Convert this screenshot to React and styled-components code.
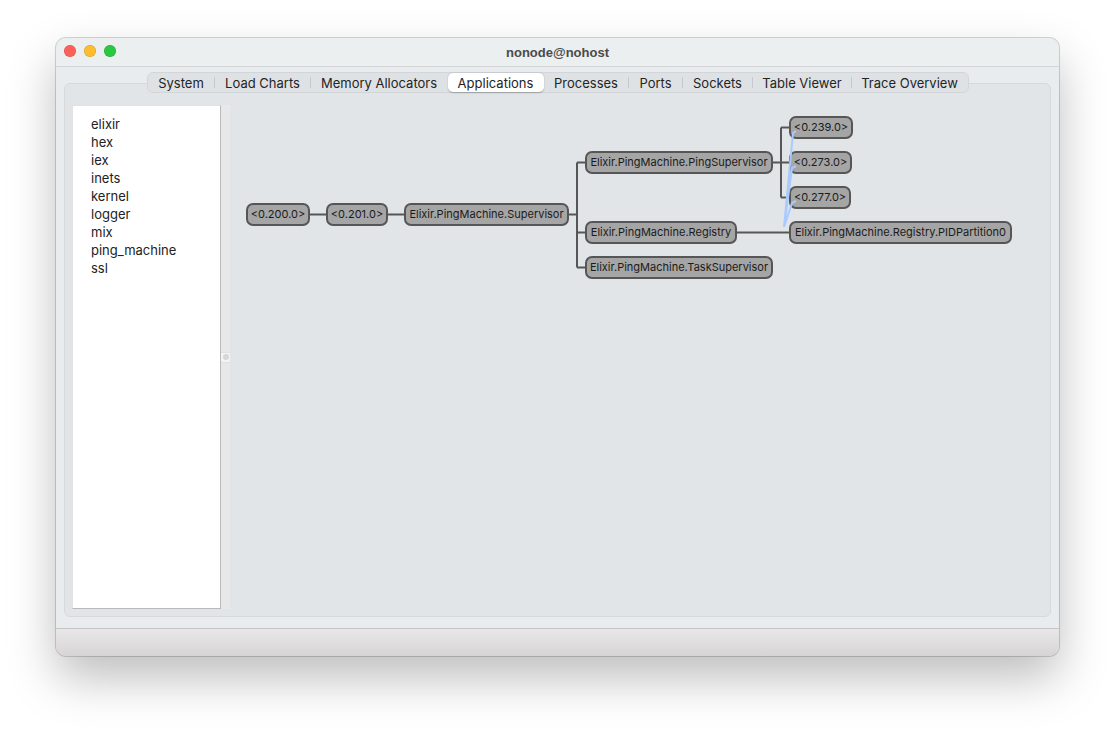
import React from 'react';
import styled, { createGlobalStyle } from 'styled-components';

const GlobalStyle = createGlobalStyle`
  html, body {
    margin: 0;
    background: #fff;
    overflow: hidden;
  }
  body {
    font-family: Inter, "Liberation Sans", sans-serif;
    -webkit-font-smoothing: antialiased;
  }
`;

const Desktop = styled.div`
  padding: 38px 0 0 56px;
  height: 730px;
  box-sizing: border-box;
`;

const Window = styled.div`
  width: 1003px;
  height: 618px;
  display: flex;
  flex-direction: column;
  border-radius: 10px;
  overflow: hidden;
  background: #e9ecee;
  box-shadow: 0 0 0 1px rgba(0, 0, 0, 0.16), 0 22px 48px rgba(0, 0, 0, 0.26);
`;

const TitleBar = styled.div`
  flex: none;
  height: 28px;
  display: grid;
  grid-template-columns: 1fr auto 1fr;
  align-items: center;
  background: #eceff0;
  border-bottom: 1px solid #d3d5d6;
`;

const Lights = styled.div`
  display: flex;
  gap: 8px;
  padding-left: 8px;
  margin-bottom: 2px;
`;

const Light = styled.span`
  width: 12px;
  height: 12px;
  border-radius: 50%;
  background: ${props => props.color};
  box-shadow: inset 0 0 0 0.5px rgba(0, 0, 0, 0.18);
`;

const Title = styled.div`
  font-family: "Liberation Sans", Arial, sans-serif;
  font-weight: bold;
  font-size: 13px;
  color: #4b4b4b;
`;

const Body = styled.div`
  flex: 1;
  display: flex;
  flex-direction: column;
  padding-top: 5px;
  min-height: 0;
`;

const TabBar = styled.div`
  align-self: center;
  display: flex;
  height: 21px;
  box-sizing: border-box;
  background: #dfe2e4;
  border: 1px solid #d3d6d8;
  border-radius: 6px;
  position: relative;
  z-index: 1;
  margin-bottom: -10px;
`;

const Tab = styled.div`
  position: relative;
  width: ${props => props.$w}px;
  display: flex;
  align-items: center;
  justify-content: center;
  font-size: 13px;
  color: #242424;
  border-radius: 5px;
  background: ${props => (props.$active ? '#fff' : 'transparent')};
  box-shadow: ${props => (props.$active ? '0 0.5px 1.5px rgba(0,0,0,0.28)' : 'none')};

  &::before {
    content: '';
    display: ${props => (props.$sep ? 'block' : 'none')};
    position: absolute;
    left: -1px;
    top: 4px;
    bottom: 4px;
    width: 1px;
    background: #c7cacc;
  }
`;

const Pane = styled.div`
  flex: 1;
  display: flex;
  min-height: 0;
  margin: 0 8px 11px;
  padding: 21px 7px 7px;
  background: #e2e5e7;
  border: 1px solid #d6d9db;
  border-radius: 6px;
`;

const AppList = styled.ul`
  width: 149px;
  margin: 0;
  padding: 9px 0 0 18px;
  list-style: none;
  box-sizing: border-box;
  background: #fff;
  border: 1px solid #e2e2e2;
  border-right-color: #b9b9b9;
  border-bottom-color: #b9b9b9;
`;

const AppItem = styled.li`
  font-size: 13px;
  line-height: 18px;
  color: #222;
`;

const Splitter = styled.div`
  width: 9px;
  display: flex;
  align-items: center;
  background: #e8e8e8;
`;

const Handle = styled.div`
  width: 100%;
  height: 9px;
  display: flex;
  align-items: center;
  justify-content: center;
  background: #f3f3f3;
  border-top: 1px solid #e0e0e0;
  border-bottom: 1px solid #e0e0e0;

  &::after {
    content: '';
    width: 6px;
    height: 6px;
    border-radius: 50%;
    background: #d6d6d6;
  }
`;

const Canvas = styled.div`
  flex: 1;
  position: relative;
`;

const Layer = styled.svg`
  position: absolute;
  left: 0;
  top: 0;
  width: 100%;
  height: 100%;
  pointer-events: none;
`;

const Node = styled.div`
  position: absolute;
  left: ${props => props.$x}px;
  top: ${props => props.$y}px;
  width: ${props => props.$w}px;
  height: 23px;
  box-sizing: border-box;
  border: 2px solid #565656;
  border-radius: 7px;
  background: #a5a5a5;
  font-size: 11px;
  line-height: 19px;
  text-align: center;
  color: #1b1b1b;
  white-space: nowrap;
`;

const StatusBar = styled.div`
  flex: none;
  height: 27px;
  border-top: 1px solid #c3c3c3;
  background: linear-gradient(#e9e7e7, #d6d4d4);
`;

const tabs = [
  ['System', 67],
  ['Load Charts', 96],
  ['Memory Allocators', 137],
  ['Applications', 96],
  ['Processes', 85],
  ['Ports', 54],
  ['Sockets', 70],
  ['Table Viewer', 99],
  ['Trace Overview', 116],
];
const activeTab = 3;

const apps = ['elixir', 'hex', 'iex', 'inets', 'kernel', 'logger', 'mix', 'ping_machine', 'ssl'];

const nodes = [
  { label: '<0.200.0>', x: 16, y: 98, w: 64 },
  { label: '<0.201.0>', x: 96, y: 98, w: 62 },
  { label: 'Elixir.PingMachine.Supervisor', x: 174, y: 98, w: 165 },
  { label: 'Elixir.PingMachine.PingSupervisor', x: 355, y: 46, w: 188 },
  { label: 'Elixir.PingMachine.Registry', x: 355, y: 116, w: 152 },
  { label: 'Elixir.PingMachine.TaskSupervisor', x: 355, y: 151, w: 188 },
  { label: '<0.239.0>', x: 559, y: 11, w: 64 },
  { label: '<0.273.0>', x: 559, y: 46, w: 63 },
  { label: '<0.277.0>', x: 559, y: 81, w: 62 },
  { label: 'Elixir.PingMachine.Registry.PIDPartition0', x: 559, y: 116, w: 223 },
];

// supervision tree edges, in canvas coordinates
const treePath = [
  'M80 109.5H96',
  'M158 109.5H174',
  'M339 109.5H347',
  'M347 57.5V162.5',
  'M347 57.5H355',
  'M347 127.5H355',
  'M347 162.5H355',
  'M543 57.5H551',
  'M551 22.5V92.5',
  'M551 22.5H559',
  'M551 57.5H559',
  'M551 92.5H559',
  'M507 127.5H559',
].join(' ');

// links from the registry partition to the ping workers
const linkPath = [
  'M554 122L563 28L566 26',
  'M554 122L562 63L566 61',
  'M554 122L562 98L566 96',
].join(' ');

export default function App() {
  return (
    <>
      <GlobalStyle />
      <Desktop>
        <Window>
          <TitleBar>
            <Lights>
              <Light color="#fe5f57" />
              <Light color="#febc2e" />
              <Light color="#28c840" />
            </Lights>
            <Title>nonode@nohost</Title>
            <span />
          </TitleBar>
          <Body>
            <TabBar>
              {tabs.map(([name, w], i) => (
                <Tab
                  key={name}
                  $w={w}
                  $active={i === activeTab}
                  $sep={i > 0 && i !== activeTab && i - 1 !== activeTab}
                >
                  {name}
                </Tab>
              ))}
            </TabBar>
            <Pane>
              <AppList>
                {apps.map(app => (
                  <AppItem key={app}>{app}</AppItem>
                ))}
              </AppList>
              <Splitter>
                <Handle />
              </Splitter>
              <Canvas>
                <Layer>
                  <path d={treePath} fill="none" stroke="#565656" strokeWidth="2" />
                </Layer>
                {nodes.map(n => (
                  <Node key={n.label} $x={n.x} $y={n.y} $w={n.w}>
                    {n.label}
                  </Node>
                ))}
                <Layer>
                  <path d={linkPath} fill="none" stroke="#a8caff" strokeWidth="2" strokeLinejoin="round" />
                </Layer>
              </Canvas>
            </Pane>
          </Body>
          <StatusBar />
        </Window>
      </Desktop>
    </>
  );
}
